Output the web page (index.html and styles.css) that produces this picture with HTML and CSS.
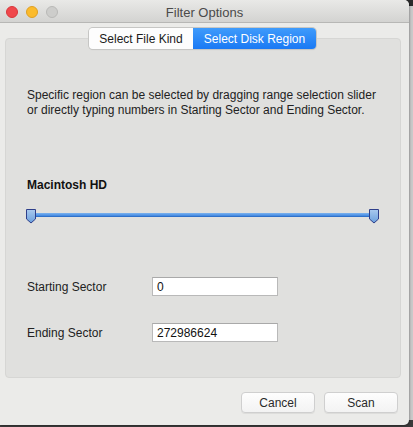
FILE: index.html
```html
<!DOCTYPE html>
<html>
<head>
<meta charset="utf-8">
<link rel="stylesheet" href="styles.css">
</head>
<body>
<div class="desk">
  <div class="window">
    <div class="titlebar">
      <div class="lights">
        <span class="light red"></span>
        <span class="light yellow"></span>
        <span class="light grey"></span>
      </div>
      <div class="title">Filter Options</div>
    </div>
    <div class="content">
      <div class="panel">
        <div class="tabs">
          <div class="tab">Select File Kind</div>
          <div class="tab active">Select Disk Region</div>
        </div>
        <p class="desc">Specific region can be selected by dragging range selection slider<br>or directly typing numbers in Starting Sector and Ending Sector.</p>
        <div class="disk">Macintosh HD</div>
        <div class="slider">
          <div class="track"></div>
          <svg class="knob kl" width="12" height="16" viewBox="0 0 12 16"><defs><linearGradient id="g1" x1="0" y1="0" x2="0" y2="1"><stop offset="0" stop-color="#a9c9ef"/><stop offset="1" stop-color="#6a9fdc"/></linearGradient></defs><path d="M1.5 1.5 H10.5 V11 L6 15 L1.5 11 Z" fill="url(#g1)" stroke="#2e3f8a" stroke-width="1" stroke-linejoin="round"/></svg>
          <svg class="knob kr" width="12" height="16" viewBox="0 0 12 16"><defs><linearGradient id="g2" x1="0" y1="0" x2="0" y2="1"><stop offset="0" stop-color="#a9c9ef"/><stop offset="1" stop-color="#6a9fdc"/></linearGradient></defs><path d="M1.5 1.5 H10.5 V11 L6 15 L1.5 11 Z" fill="url(#g2)" stroke="#2e3f8a" stroke-width="1" stroke-linejoin="round"/></svg>
        </div>
        <div class="row first">
          <span class="label">Starting Sector</span>
          <div class="field">0</div>
        </div>
        <div class="row">
          <span class="label">Ending Sector</span>
          <div class="field">272986624</div>
        </div>
      </div>
      <div class="buttons">
        <div class="btn">Cancel</div>
        <div class="btn">Scan</div>
      </div>
    </div>
  </div>
</div>
</body>
</html>
```
FILE: styles.css
```css
* { box-sizing: border-box; }
html, body { margin: 0; padding: 0; }
body {
  width: 413px;
  height: 427px;
  overflow: hidden;
  background: #cfcfcf;
  font-family: "Liberation Sans", Arial, sans-serif;
  color: #1e1e1e;
}
.desk {
  width: 413px;
  height: 427px;
  background: linear-gradient(to bottom, #2a2a2a 0, #2a2a2a 6px, #c9c9c9 6px, #c9c9c9 420px, #3a3a3a 420px);
}
.window {
  width: 409px;
  height: 425px;
  background: #ebebe9;
  border-radius: 0 5px 5px 0;
  box-shadow: 1px 1px 2px rgba(0,0,0,0.25);
  display: flex;
  flex-direction: column;
  overflow: hidden;
}
.titlebar {
  height: 23px;
  flex: none;
  background: linear-gradient(to bottom, #e9e9e7, #d3d3d1);
  border-bottom: 1px solid #b7b7b5;
  position: relative;
  display: flex;
  align-items: center;
  justify-content: center;
}
.lights {
  position: absolute;
  left: 6px;
  top: 6px;
  display: flex;
  gap: 8px;
}
.light {
  width: 12px;
  height: 12px;
  border-radius: 50%;
  display: block;
}
.red { background: #f0484c; border: 1px solid #d9373b; }
.yellow { background: #fbbb2c; border: 1px solid #dfa023; }
.grey { background: #cdcdcb; border: 1px solid #b9b9b7; }
.title {
  font-size: 13px;
  color: #4a4a4a;
  padding-top: 2px;
}
.content {
  flex: 1;
  display: flex;
  flex-direction: column;
  padding: 15px 8px 0 5px;
}
.panel {
  height: 340px;
  flex: none;
  background: #e0e0de;
  border: 1px solid #d6d6d4;
  border-radius: 4px;
  position: relative;
  padding: 0 0 0 21px;
}
.tabs {
  position: absolute;
  left: 83px;
  top: -11px;
  display: flex;
  height: 21px;
  border-radius: 4px;
  box-shadow: 0 0 0 1px #c6c6c4, 0 1px 1px rgba(0,0,0,0.12);
  overflow: hidden;
  font-size: 12px;
  white-space: nowrap;
}
.tab {
  background: #fdfdfd;
  color: #1a1a1a;
  display: flex;
  align-items: center;
  width: 104px;
  justify-content: center;
}
.tab.active {
  background: linear-gradient(to bottom, #3f9bfb, #1a79f4);
  color: #fff;
  width: 123px;
}
.desc {
  margin: 0;
  padding-top: 49px;
  font-size: 12px;
  line-height: 15px;
  color: #222;
  white-space: nowrap;
}
.disk {
  margin-top: 60px;
  font-size: 12px;
  font-weight: bold;
  line-height: 14px;
  color: #111;
}
.slider {
  position: relative;
  margin-top: 16px;
  margin-left: -2px;
  width: 355px;
  height: 18px;
}
.track {
  position: absolute;
  left: 6px;
  right: 6px;
  top: 5px;
  height: 4px;
  background: linear-gradient(to bottom, #7cb3ef, #3f86e0);
  border-bottom: 1px solid #2f70c9;
}
.knob { position: absolute; top: 0; }
.kl { left: 0; }
.kr { right: 0; }
.row {
  display: flex;
  align-items: center;
  height: 19px;
  margin-top: 27px;
}
.row.first { margin-top: 51px; }
.label {
  width: 125px;
  font-size: 12px;
  color: #222;
}
.field {
  width: 126px;
  height: 19px;
  background: #fff;
  border: 1px solid #b9b9b9;
  border-top-color: #a9a9a9;
  font-size: 12px;
  padding: 2px 0 0 4px;
  color: #111;
}
.buttons {
  display: flex;
  justify-content: flex-end;
  gap: 9px;
  padding: 14px 3px 0 0;
}
.btn {
  width: 74px;
  height: 21px;
  background: linear-gradient(to bottom, #fdfdfd, #f3f3f3);
  border: 1px solid #cfcfcf;
  border-radius: 4px;
  box-shadow: 0 1px 0 rgba(0,0,0,0.06);
  font-size: 12px;
  color: #2a2a2a;
  display: flex;
  align-items: center;
  justify-content: center;
}
```
